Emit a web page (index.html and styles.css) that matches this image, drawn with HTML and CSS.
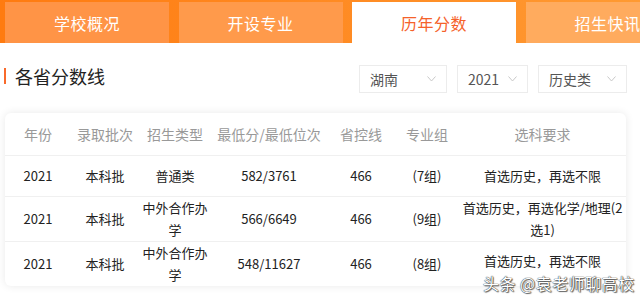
FILE: index.html
```html
<!DOCTYPE html>
<html lang="zh">
<head>
<meta charset="utf-8">
<link rel="stylesheet" href="styles.css">
</head>
<body>
<div class="page">
  <nav class="tabs">
    <div class="tab t1">学校概况</div>
    <div class="tab t2">开设专业</div>
    <div class="tab active">历年分数</div>
    <div class="tab t4">招生快讯</div>
  </nav>
  <div class="head">
    <h2 class="title">各省分数线</h2>
    <div class="filters">
      <div class="sel w88"><span>湖南</span><svg width="9" height="6" viewBox="0 0 9 6"><polyline points="0.5,0.5 4.5,5 8.5,0.5" fill="none" stroke="#c8c8c8" stroke-width="1"/></svg></div>
      <div class="sel w71"><span>2021</span><svg width="9" height="6" viewBox="0 0 9 6"><polyline points="0.5,0.5 4.5,5 8.5,0.5" fill="none" stroke="#c8c8c8" stroke-width="1"/></svg></div>
      <div class="sel w89"><span>历史类</span><svg width="9" height="6" viewBox="0 0 9 6"><polyline points="0.5,0.5 4.5,5 8.5,0.5" fill="none" stroke="#c8c8c8" stroke-width="1"/></svg></div>
    </div>
  </div>
  <div class="card">
    <table class="grid">
      <colgroup>
        <col class="c1"><col class="c2"><col class="c3"><col class="c4"><col class="c5"><col class="c6"><col class="c7">
      </colgroup>
      <thead>
        <tr><th>年份</th><th>录取批次</th><th>招生类型</th><th>最低分/最低位次</th><th>省控线</th><th>专业组</th><th>选科要求</th></tr>
      </thead>
      <tbody>
        <tr class="r1"><td>2021</td><td>本科批</td><td>普通类</td><td>582/3761</td><td>466</td><td>(7组)</td><td>首选历史，再选不限</td></tr>
        <tr><td>2021</td><td>本科批</td><td>中外合作办学</td><td>566/6649</td><td>466</td><td>(9组)</td><td>首选历史，再选化学/地理(2选1)</td></tr>
        <tr class="last"><td>2021</td><td>本科批</td><td>中外合作办学</td><td>548/11627</td><td>466</td><td>(8组)</td><td class="up">首选历史，再选不限</td></tr>
      </tbody>
    </table>
  </div>
  <div class="watermark">头条 @袁老师聊高校</div>
</div>
</body>
</html>
```
FILE: styles.css
```css
* { box-sizing: border-box; }
html, body { margin: 0; padding: 0; background: #fff; }
body {
  font-family: "Noto Sans CJK SC", "Microsoft YaHei", sans-serif;
  width: 640px;
  height: 300px;
  overflow: hidden;
}
.page { position: relative; width: 640px; height: 300px; }

.tabs {
  display: flex;
  gap: 9.5px;
  height: 43px;
  padding: 2px 0 0 5px;
  background: linear-gradient(90deg, #ff7b10 0%, #ff8a22 50%, #ff9a32 100%);
  overflow: hidden;
}
.tab {
  flex: 0 0 164px;
  height: 41px;
  display: flex;
  align-items: center;
  justify-content: center;
  color: #fff;
  font-size: 16px;
  letter-spacing: 0.5px;
}
.t1 { background: #ff9446; }
.t2 { background: #ff9a4b; }
.t4 { background: #ffab5e; }
.active { background: #fff; color: #f5622a; }

.head {
  height: 70px;
  display: flex;
  align-items: center;
  justify-content: space-between;
  padding: 0 13px 0 4px;
}
.title {
  margin: 0;
  font-size: 18px;
  font-weight: normal;
  color: #222;
  border-left: 2px solid #f96a2b;
  padding-left: 9px;
  line-height: 16px;
  height: 16px;
  display: flex;
  align-items: center;
  margin-top: -4px;
}
.filters { display: flex; gap: 10px; margin-top: 2px; }
.sel {
  height: 28px;
  border: 1px solid #ececec;
  display: flex;
  align-items: center;
  justify-content: space-between;
  padding: 0 10px 0 10px;
  font-size: 14px;
  color: #555;
}
.w88 { width: 88px; }
.w71 { width: 71px; }
.w89 { width: 89px; }

.card {
  margin: 0 14px 0 5px;
  background: #fff;
  border-radius: 6px;
  box-shadow: 0 0 8px rgba(0,0,0,0.09);
  overflow: hidden;
}
.grid {
  width: 100%;
  border-collapse: collapse;
  table-layout: fixed;
}
.c1 { width: 66px; }
.c2 { width: 68px; }
.c3 { width: 72px; }
.c4 { width: 116px; }
.c5 { width: 68px; }
.c6 { width: 64px; }
.c7 { width: 167px; }
th {
  height: 42px;
  font-weight: normal;
  font-size: 14px;
  color: #999;
  text-align: center;
  padding: 0;
  border-bottom: 1px solid #f0f0f0;
  white-space: nowrap;
}
td {
  height: 44px;
  font-size: 13px;
  line-height: 22px;
  color: #222;
  text-align: center;
  padding: 0 3px;
  border-bottom: 1px solid #f0f0f0;
}
.r1 td { height: 41px; }
.last td { border-bottom: none; }
.last td.up { vertical-align: top; padding-top: 8px; }

.watermark {
  position: absolute;
  left: 483px;
  top: 273px;
  font-size: 16px;
  line-height: 20px;
  color: #fff;
  letter-spacing: 0.5px;
  text-shadow: 0 0 1px #333, 0 0 1px #333, 1px 1px 1px rgba(0,0,0,0.6);
}
```
